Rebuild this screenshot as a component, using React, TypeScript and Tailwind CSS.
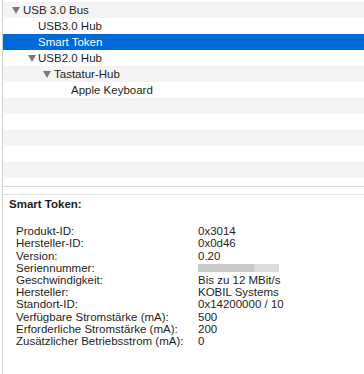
import React from "react";

type Row = { label?: string; pl: number; tri?: boolean; gap?: number; selected?: boolean };

const rows: Row[] = [
  { label: "USB 3.0 Bus", pl: 9, tri: true, gap: 3 },
  { label: "USB3.0 Hub", pl: 35 },
  { label: "Smart Token", pl: 35, selected: true },
  { label: "USB2.0 Hub", pl: 25, tri: true, gap: 2 },
  { label: "Tastatur-Hub", pl: 40, tri: true, gap: 3 },
  { label: "Apple Keyboard", pl: 68 },
  { pl: 0 },
  { pl: 0 },
  { pl: 0 },
  { pl: 0 },
  { pl: 0 },
];

const details: [string, string][] = [
  ["Produkt-ID:", "0x3014"],
  ["Hersteller-ID:", "0x0d46"],
  ["Version:", "0.20"],
  ["Seriennummer:", ""],
  ["Geschwindigkeit:", "Bis zu 12 MBit/s"],
  ["Hersteller:", "KOBIL Systems"],
  ["Standort-ID:", "0x14200000 / 10"],
  ["Verfügbare Stromstärke (mA):", "500"],
  ["Erforderliche Stromstärke (mA):", "200"],
  ["Zusätzlicher Betriebsstrom (mA):", "0"],
];

function Tri() {
  return (
    <svg width="8" height="7" viewBox="0 0 8 7" className="shrink-0">
      <polygon points="0,0 8,0 4,7" fill="#7b7b7b" />
    </svg>
  );
}

export default function App() {
  return (
    <div
      className="w-[364px] h-[374px] bg-white overflow-hidden flex flex-col pl-[2px] text-[11.5px] text-[#1e1e1e]"
      style={{ fontFamily: '"Liberation Sans", Arial, sans-serif' }}
    >
      <div className="flex-1 flex flex-col border-l border-[#cfcfcf]">
        <div className="pt-[2px] h-[186px] flex flex-col">
          {rows.map((r, i) => (
            <div
              key={i}
              className={`h-[16px] flex items-center shrink-0 ${
                r.selected ? "bg-[#0069d9] text-white" : i % 2 === 0 ? "bg-[#f4f4f4]" : "bg-white"
              }`}
              style={{ paddingLeft: r.pl }}
            >
              {r.tri && <Tri />}
              {r.label && (
                <span className="leading-[16px] whitespace-nowrap" style={{ marginLeft: r.tri ? r.gap : 0 }}>
                  {r.label}
                </span>
              )}
            </div>
          ))}
        </div>
        <div className="h-px bg-[#d6d6d6]" />
        <div className="h-[7px]" />
        <div className="h-px bg-[#e2e2e2]" />
        <div className="pt-[3px] pl-[6px] leading-[12.2px]">
          <div className="font-bold">Smart Token:</div>
          <div className="mt-[15px] pl-[7px] grid grid-cols-[182px_1fr]">
            {details.map(([k, v]) => (
              <React.Fragment key={k}>
                <div className="whitespace-nowrap">{k}</div>
                <div className="whitespace-nowrap h-[12.2px] flex items-center">
                  {k === "Seriennummer:" ? (
                    <div className="flex h-[8px] mt-[1px]">
                      <div className="w-[56px] bg-[#c9c9c9]" />
                      <div className="w-[25px] bg-[#dcdcdc]" />
                    </div>
                  ) : (
                    v
                  )}
                </div>
              </React.Fragment>
            ))}
          </div>
        </div>
      </div>
    </div>
  );
}
